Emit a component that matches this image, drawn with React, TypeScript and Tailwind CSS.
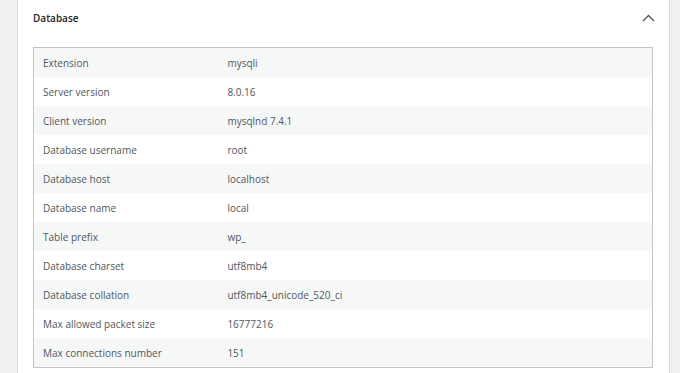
import React from "react";

const rows: [string, string][] = [
  ["Extension", "mysqli"],
  ["Server version", "8.0.16"],
  ["Client version", "mysqlnd 7.4.1"],
  ["Database username", "root"],
  ["Database host", "localhost"],
  ["Database name", "local"],
  ["Table prefix", "wp_"],
  ["Database charset", "utf8mb4"],
  ["Database collation", "utf8mb4_unicode_520_ci"],
  ["Max allowed packet size", "16777216"],
  ["Max connections number", "151"],
];

export default function App() {
  return (
    <div
      className="w-[680px] h-[373px] overflow-hidden bg-[#f0f0f1] flex"
      style={{ fontFamily: '"Open Sans", "Noto Sans", sans-serif' }}
    >
      <div className="ml-[17px] w-[653px] h-full bg-white border-x border-[#dcdcde] flex flex-col">
        <div className="h-[47px] shrink-0 flex items-center justify-between pl-[15px] pr-[14px] pb-[11px]">
          <span className="text-[10px] font-semibold text-[#1d2327]">Database</span>
          <svg width="13" height="8" viewBox="0 0 13 8" fill="none">
            <path d="M1 7 L6.5 1.5 L12 7" stroke="#50575e" strokeWidth="1.4" />
          </svg>
        </div>
        <div className="ml-[15px] mr-[16px] border border-[#c3c4c7]">
          {rows.map(([k, v], i) => (
            <div
              key={k}
              className={`flex h-[29px] pt-[1px] items-center text-[10px] text-[#50575e] ${i % 2 === 0 ? "bg-[#f6f7f7]" : "bg-white"}`}
            >
              <div className="w-[30%] pl-[9px]">{k}</div>
              <div className="pl-[8px]">{v}</div>
            </div>
          ))}
        </div>
      </div>
    </div>
  );
}
